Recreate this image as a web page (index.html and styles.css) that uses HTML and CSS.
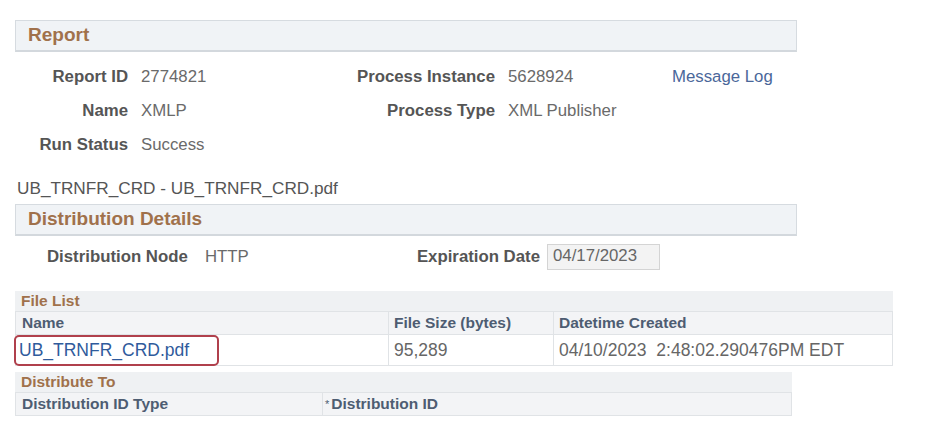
FILE: index.html
```html
<!DOCTYPE html>
<html lang="en">
<head>
    <meta charset="UTF-8">
    <meta name="viewport" content="width=device-width, initial-scale=1.0">
    <title>Report Detail</title>
    <link rel="stylesheet" href="styles.css">
</head>
<body>
    <div class="page">
        <div class="section-bar">Report</div>

        <div class="fields">
            <div class="label">Report ID</div>
            <div class="value">2774821</div>
            <div class="label">Process Instance</div>
            <div class="value">5628924</div>
            <a class="link" href="#">Message Log</a>

            <div class="label">Name</div>
            <div class="value">XMLP</div>
            <div class="label">Process Type</div>
            <div class="value">XML Publisher</div>
            <div></div>

            <div class="label">Run Status</div>
            <div class="value">Success</div>
            <div></div>
            <div></div>
            <div></div>
        </div>

        <p class="file-title">UB_TRNFR_CRD - UB_TRNFR_CRD.pdf</p>

        <div class="section-bar">Distribution Details</div>

        <div class="dist-row">
            <div class="label dist-label">Distribution Node</div>
            <div class="value dist-value">HTTP</div>
            <div class="label exp-label">Expiration Date</div>
            <div class="date-box">04/17/2023</div>
        </div>

        <div class="grid file-list">
            <div class="grid-title">File List</div>
            <div class="grid-row grid-head">
                <div class="cell col-name">Name</div>
                <div class="cell col-size">File Size (bytes)</div>
                <div class="cell col-date">Datetime Created</div>
            </div>
            <div class="grid-row grid-data">
                <div class="cell col-name">
                    <a class="file-link" href="#">UB_TRNFR_CRD.pdf</a>
                    <span class="highlight"></span>
                </div>
                <div class="cell col-size">95,289</div>
                <div class="cell col-date">04/10/2023&nbsp; 2:48:02.290476PM EDT</div>
            </div>
        </div>

        <div class="grid dist-to">
            <div class="grid-title">Distribute To</div>
            <div class="grid-row grid-head">
                <div class="cell col-idtype">Distribution ID Type</div>
                <div class="cell col-id"><span class="req">*</span>Distribution ID</div>
            </div>
        </div>
    </div>
</body>
</html>
```

FILE: styles.css
```css
* {
    box-sizing: border-box;
    margin: 0;
    padding: 0;
}

body {
    font-family: "Liberation Sans", Arial, sans-serif;
    background-color: #ffffff;
    color: #666;
}

.page {
    padding: 20px 0 0 15px;
}

.section-bar {
    width: 782px;
    height: 32px;
    padding-left: 12px;
    background-color: #f0f3f6;
    border: 1px solid #d6dbe0;
    border-bottom: 2px solid #d3d8dd;
    color: #a0714b;
    font-size: 19px;
    font-weight: bold;
    line-height: 28px;
}

.fields {
    display: grid;
    grid-template-columns: 126px 160px 207px 164px auto;
    grid-auto-rows: 34px;
    align-items: center;
    margin-top: 8px;
    font-size: 16.8px;
}

.label {
    color: #555;
    font-weight: bold;
    text-align: right;
    padding-right: 13px;
}

.value {
    color: #6a6a6a;
}

.link {
    color: #4a679a;
    text-decoration: none;
}

.file-title {
    margin-top: 16px;
    font-size: 17.2px;
    line-height: 20px;
    color: #555;
    padding-left: 2px;
}

.section-bar + .dist-row {
    margin-top: 4px;
}

.file-title + .section-bar {
    margin-top: 6px;
}

.dist-row {
    display: flex;
    align-items: center;
    height: 34px;
    padding-left: 32px;
    font-size: 16.8px;
}

.dist-label {
    width: 158px;
    text-align: left;
    padding-right: 0;
}

.dist-value {
    width: 200px;
}

.exp-label {
    width: 142px;
    padding-right: 7px;
}

.date-box {
    width: 113px;
    height: 26px;
    padding-left: 5px;
    background-color: #f3f3f3;
    border: 1px solid #d4d4d4;
    color: #666;
    line-height: 22px;
}

.grid {
    font-size: 15.5px;
}

.file-list {
    width: 878px;
    margin-top: 17px;
}

.dist-to {
    width: 777px;
    margin-top: 6px;
}

.grid-title {
    height: 20px;
    padding-left: 6px;
    background-color: #eff1f3;
    color: #a0714b;
    font-weight: bold;
    line-height: 20px;
}

.grid-row {
    display: flex;
}

.grid-head {
    height: 24px;
    background-color: #f3f4f6;
    border: 1px solid #e0e3e6;
    color: #4e5d72;
    font-weight: bold;
    line-height: 22px;
}

.grid-data {
    height: 31px;
    border: 1px solid #e0e3e6;
    border-top: none;
    font-size: 17.5px;
    line-height: 30px;
}

.cell {
    padding-left: 5px;
    border-left: 1px solid #e0e3e6;
}

.cell:first-child {
    border-left: none;
}

.col-name {
    width: 372px;
    position: relative;
}

.grid-head .col-name {
    padding-left: 6px;
}

.grid-data .col-name {
    padding-left: 3px;
}

.col-size {
    width: 165px;
}

.col-date {
    flex: 1;
}

.col-idtype {
    width: 306px;
    padding-left: 6px;
}

.col-id {
    flex: 1;
    padding-left: 2px;
}

.req {
    font-size: 11px;
    font-weight: normal;
    vertical-align: top;
    margin-right: 2px;
}

.file-link {
    color: #2f5b9c;
    text-decoration: none;
}

.highlight {
    position: absolute;
    left: -2px;
    top: 0;
    width: 205px;
    height: 31px;
    border: 2px solid #b0404c;
    border-radius: 5px;
}
```
